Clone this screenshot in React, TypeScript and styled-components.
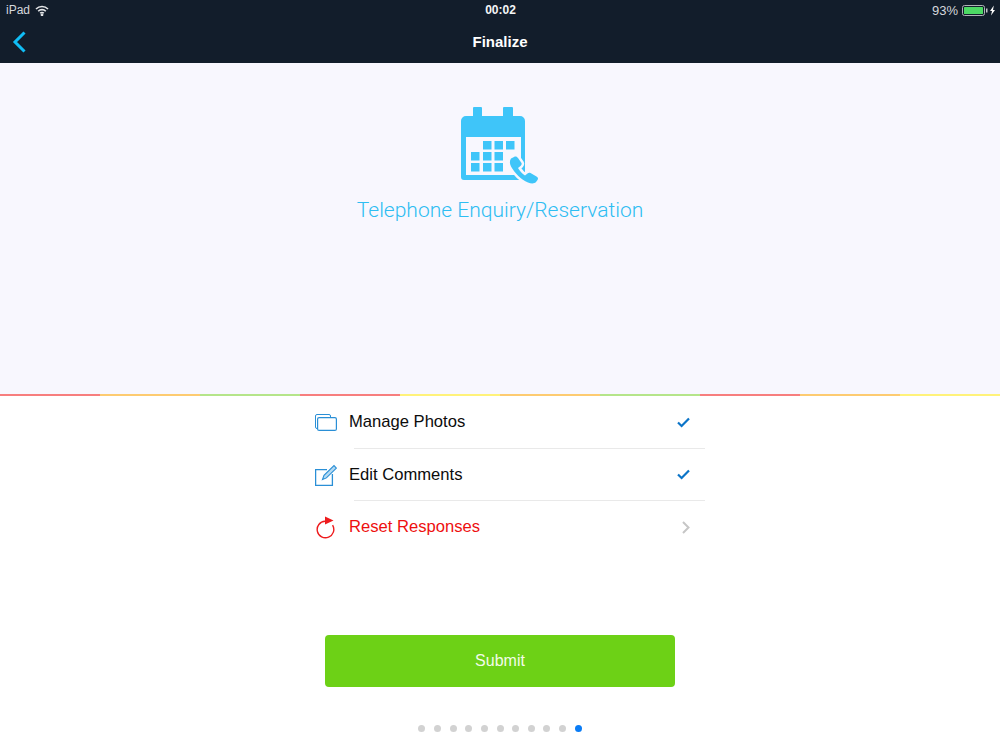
import React from "react";
import styled, { createGlobalStyle } from "styled-components";

const GlobalStyle = createGlobalStyle`
  html, body {
    margin: 0;
    padding: 0;
    background: #fff;
    font-family: "Liberation Sans", Arial, sans-serif;
  }
`;

const Page = styled.div`
  width: 1000px;
  height: 750px;
  display: flex;
  flex-direction: column;
  overflow: hidden;
`;

const Header = styled.header`
  height: 63px;
  background: #121d2b;
  display: flex;
  flex-direction: column;
`;

const StatusBar = styled.div`
  height: 20px;
  padding: 0 5px 0 6px;
  display: grid;
  grid-template-columns: 1fr auto 1fr;
  align-items: center;
  color: #d5d8dc;
  font-size: 12px;
`;

const StatusLeft = styled.div`
  display: flex;
  align-items: center;
  gap: 5px;
`;

const Clock = styled.div`
  color: #f4f5f6;
  font-weight: 700;
  font-size: 12px;
`;

const StatusRight = styled.div`
  display: flex;
  align-items: center;
  justify-content: flex-end;
  gap: 4px;
  font-size: 13px;
`;

const NavBar = styled.div`
  height: 43px;
  padding: 0 0 0 12px;
  display: flex;
  align-items: center;
  position: relative;
`;

const NavTitle = styled.h1`
  position: absolute;
  left: 0;
  right: 0;
  margin: 0;
  text-align: center;
  color: #fff;
  font-size: 15px;
  font-weight: 700;
`;

const Hero = styled.section`
  height: 331px;
  background: #f8f7fe;
  display: flex;
  flex-direction: column;
  align-items: center;
  padding-top: 43px;
  box-sizing: border-box;
`;

const HeroTitle = styled.h2`
  margin: 8px 0 0;
  color: #2ebdf2;
  font-family: Roboto, "Liberation Sans", sans-serif;
  font-size: 21px;
  font-weight: 300;
  line-height: 28px;
`;

const Stripe = styled.div`
  height: 2px;
  display: grid;
  grid-template-columns: repeat(10, 1fr);
`;

const StripeCell = styled.div<{ $color: string }>`
  background: ${(p) => p.$color};
`;

const List = styled.ul`
  list-style: none;
  margin: 0 0 0 315px;
  padding: 0;
  width: 390px;
`;

const Row = styled.li`
  height: 52px;
  display: flex;
  align-items: center;
`;

const RowIcon = styled.div`
  width: 34px;
  height: 30px;
  display: flex;
  align-items: center;
  flex-shrink: 0;
`;

const RowBody = styled.div`
  flex: 1;
  display: flex;
  align-items: center;
  justify-content: space-between;
  padding-right: 15px;
`;

const RowLabel = styled.span<{ $danger?: boolean }>`
  font-size: 16.6px;
  color: ${(p) => (p.$danger ? "#ee0f10" : "#0c0c0c")};
`;

const Divider = styled.li`
  height: 1px;
  margin: -0.5px 0 0 39px;
  background: #e9e9e9;
`;

const Footer = styled.div`
  flex: 1;
  display: flex;
  flex-direction: column;
  align-items: center;
  padding-top: 82px;
`;

const SubmitButton = styled.button`
  width: 350px;
  height: 52px;
  border: none;
  border-radius: 4px;
  background: #6dd116;
  color: #f2fbe9;
  font-family: "Liberation Sans", Arial, sans-serif;
  font-size: 16px;
`;

const Dots = styled.div`
  margin-top: 38px;
  display: flex;
  gap: 8.65px;
`;

const Dot = styled.span<{ $active: boolean }>`
  width: 7px;
  height: 7px;
  border-radius: 50%;
  background: ${(p) => (p.$active ? "#0a7cf5" : "#d2d2d2")};
`;

const stripeColors = [
  "#f77e7e",
  "#fdcb71",
  "#b5e58a",
  "#f77e7e",
  "#fff27a",
  "#fdcb71",
  "#b5e58a",
  "#f77e7e",
  "#fdcb71",
  "#fff27a",
];

const Wifi = () => (
  <svg width="14" height="11" viewBox="0 0 14 11" fill="none" stroke="#e4e6e8" strokeWidth="1.6">
    <path d="M1 4a8.6 8.6 0 0 1 12 0" />
    <path d="M3.2 6.2a5.4 5.4 0 0 1 7.6 0" />
    <path d="M5.2 8.2a2.5 2.5 0 0 1 3.6 0" />
    <circle cx="7" cy="9.8" r="0.6" fill="#e4e6e8" />
  </svg>
);

const Battery = () => (
  <svg width="33" height="11" viewBox="0 0 33 11">
    <rect x="0.5" y="0.5" width="22" height="10" rx="2" fill="none" stroke="#aeb2b6" />
    <rect x="2" y="2" width="19" height="7" rx="0.5" fill="#4cd964" />
    <rect x="24" y="3.5" width="1.5" height="4" fill="#c3c6c9" />
    <path d="M31.8 0.5 28 6h2l-1 4.5L33 5h-2z" fill="#fff" />
  </svg>
);

const BackArrow = () => (
  <svg width="14" height="22" viewBox="0 0 14 22" fill="none" stroke="#10bdf5" strokeWidth="3">
    <path d="M12.5 1.5 3 11l9.5 9.5" />
  </svg>
);

const calendarCells = [
  [23, 35],
  [34.5, 35],
  [46, 35],
  [11, 46],
  [23, 46],
  [34.5, 46],
  [11, 57],
  [23, 57],
  [34.5, 57],
];

const handset =
  "M54 51c2-1 3 0 4 1l3.5 5c.5 1 0 2-1 3l-2.5 2c2 3 4 5.5 7 7.5l2.5-2c1-1 2-1 3-.5l6 3.5c1.5 1 2 2 1 3.5l-1.5 2c-2 2-5 1.5-8 .5-7-3-13-9-17-16-1.5-3-1.5-6 0-8z";

const CalendarIcon = () => (
  <svg width="80" height="82" viewBox="0 0 80 82">
    <path
      fill="#3fc5f9"
      d="M13 2a1 1 0 0 1 1-1h7a1 1 0 0 1 1 1v8h21V2a1 1 0 0 1 1-1h8a1 1 0 0 1 1 1v8h7a5 5 0 0 1 5 5v56a3 3 0 0 1-3 3H4a3 3 0 0 1-3-3V15a5 5 0 0 1 5-5h7z"
    />
    <rect x="6" y="31" width="55" height="38" fill="#f8f7fe" />
    {calendarCells.map(([x, y]) => (
      <rect key={`${x}-${y}`} x={x} y={y} width="8.5" height="8.5" fill="#3fc5f9" />
    ))}
    <path d={handset} fill="#f8f7fe" stroke="#f8f7fe" strokeWidth="5" strokeLinejoin="round" />
    <path d={handset} fill="#3fc5f9" />
  </svg>
);

const PhotosIcon = () => (
  <svg width="22" height="17" viewBox="0 0 22 17" fill="none" stroke="#2a8fd6">
    <path d="M2.5 14.5h-.5a1.5 1.5 0 0 1-1.5-1.5V2A1.5 1.5 0 0 1 2 .5h12A1.5 1.5 0 0 1 15.5 2v1" />
    <rect x="2.6" y="3.6" width="18.8" height="12.8" rx="1.5" strokeWidth="1.2" />
  </svg>
);

const EditIcon = () => (
  <svg width="22" height="22" viewBox="0 0 22 22" fill="none" stroke="#2a8fd6" strokeWidth="1.3">
    <path d="M12 5.6H.6v15.8h16.8V10" />
    <path d="M7.5 15.5 9 11.3 19 1.6l2.4 2.5-10 9.8z" fill="#b5daf2" strokeWidth="1.1" />
  </svg>
);

const ResetIcon = () => (
  <svg width="20" height="24" viewBox="0 0 20 24" fill="none">
    <path d="M10 6.2A8.3 8.3 0 1 0 17.6 10.2" stroke="#ee1b1d" strokeWidth="1.4" />
    <path d="M10 1.5 18.5 5.5 10 9.5z" fill="#ee1b1d" />
  </svg>
);

const Check = () => (
  <svg width="13" height="11" viewBox="0 0 13 11" fill="none" stroke="#0b74c8" strokeWidth="2.2">
    <path d="M1 5.5 4.6 9 12 1.5" />
  </svg>
);

const Chevron = () => (
  <svg width="8" height="13" viewBox="0 0 8 13" fill="none" stroke="#c6c6c6" strokeWidth="2">
    <path d="M1 1l5.5 5.5L1 12" />
  </svg>
);

const rows = [
  { label: "Manage Photos", icon: <PhotosIcon />, trailing: <Check /> },
  { label: "Edit Comments", icon: <EditIcon />, trailing: <Check /> },
  { label: "Reset Responses", icon: <ResetIcon />, trailing: <Chevron />, danger: true },
];

const App = () => (
  <Page>
    <GlobalStyle />
    <Header>
      <StatusBar>
        <StatusLeft>
          iPad <Wifi />
        </StatusLeft>
        <Clock>00:02</Clock>
        <StatusRight>
          93% <Battery />
        </StatusRight>
      </StatusBar>
      <NavBar>
        <BackArrow />
        <NavTitle>Finalize</NavTitle>
      </NavBar>
    </Header>
    <Hero>
      <CalendarIcon />
      <HeroTitle>Telephone Enquiry/Reservation</HeroTitle>
    </Hero>
    <Stripe>
      {stripeColors.map((color, i) => (
        <StripeCell key={i} $color={color} />
      ))}
    </Stripe>
    <List>
      {rows.map((row, i) => (
        <React.Fragment key={row.label}>
          <Row>
            <RowIcon>{row.icon}</RowIcon>
            <RowBody>
              <RowLabel $danger={row.danger}>{row.label}</RowLabel>
              {row.trailing}
            </RowBody>
          </Row>
          {i < rows.length - 1 && <Divider />}
        </React.Fragment>
      ))}
    </List>
    <Footer>
      <SubmitButton>Submit</SubmitButton>
      <Dots>
        {Array.from({ length: 11 }, (_, i) => (
          <Dot key={i} $active={i === 10} />
        ))}
      </Dots>
    </Footer>
  </Page>
);

export default App;
